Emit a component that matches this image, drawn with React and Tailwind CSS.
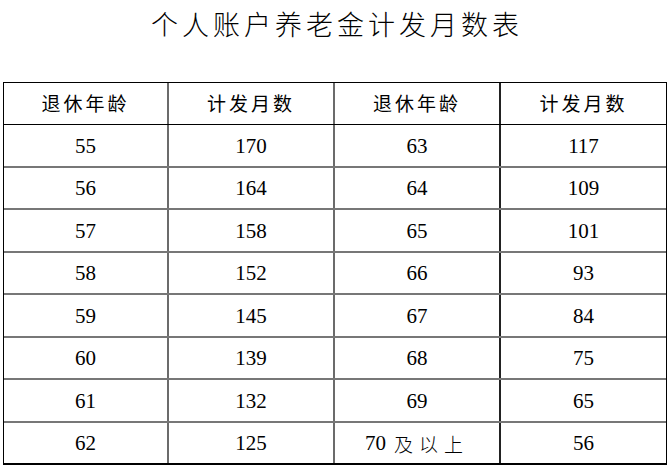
import React from 'react';

const rows = [
  ['55', '170', '63', '117'],
  ['56', '164', '64', '109'],
  ['57', '158', '65', '101'],
  ['58', '152', '66', '93'],
  ['59', '145', '67', '84'],
  ['60', '139', '68', '75'],
  ['61', '132', '69', '65'],
  ['62', '125', '70 及以上', '56'],
];

const serif = { fontFamily: '"Liberation Serif", "Noto Sans CJK SC", serif' };

function Cell({ children, divider, header }) {
  return (
    <div
      className={
        'flex items-center justify-center ' +
        (divider === 'gray' ? 'border-r-2 border-[#6b6b6b] ' : '') +
        (divider === 'black' ? 'border-r-2 border-[#222] ' : '') +
        (header ? 'text-[19px] tracking-[3px]' : 'text-[21px] pt-[2px]')
      }
    >
      {children}
    </div>
  );
}

export default function App() {
  return (
    <div className="w-[672px] h-[472px] bg-white text-black">
      <div className="h-[48px] flex items-center justify-center">
        <h1
          className="text-[27px] font-light tracking-[4px] pl-[2px]"
          style={{ fontFamily: '"Noto Sans CJK SC", sans-serif' }}
        >
          个人账户养老金计发月数表
        </h1>
      </div>
      <div className="mt-[34px] ml-[3px] w-[664px] border border-black border-b-2">
        <div
          className="grid grid-cols-[165px_166px_166px_1fr] h-[42px] border-b border-black"
          style={{ fontFamily: '"Noto Sans CJK SC", sans-serif' }}
        >
          <Cell header divider="gray">退休年龄</Cell>
          <Cell header divider="gray">计发月数</Cell>
          <Cell header divider="black">退休年龄</Cell>
          <Cell header>计发月数</Cell>
        </div>
        {rows.map((r, i) => (
          <div
            key={r[0]}
            className={
              'grid grid-cols-[165px_166px_166px_1fr] ' +
              (i < rows.length - 1 ? 'h-[42.5px] border-b-2 border-[#777]' : 'h-[40.5px]')
            }
            style={serif}
          >
            <Cell divider="gray">{r[0]}</Cell>
            <Cell divider="gray">{r[1]}</Cell>
            {r[2].includes('及') ? (
              <Cell divider="black">
                <span>70</span>
                <span
                  className="ml-[8px] text-[19px] font-light tracking-[6px]"
                  style={{ fontFamily: '"Noto Sans CJK SC", sans-serif' }}
                >
                  及以上
                </span>
              </Cell>
            ) : (
              <Cell divider="black">{r[2]}</Cell>
            )}
            <Cell>{r[3]}</Cell>
          </div>
        ))}
      </div>
    </div>
  );
}
